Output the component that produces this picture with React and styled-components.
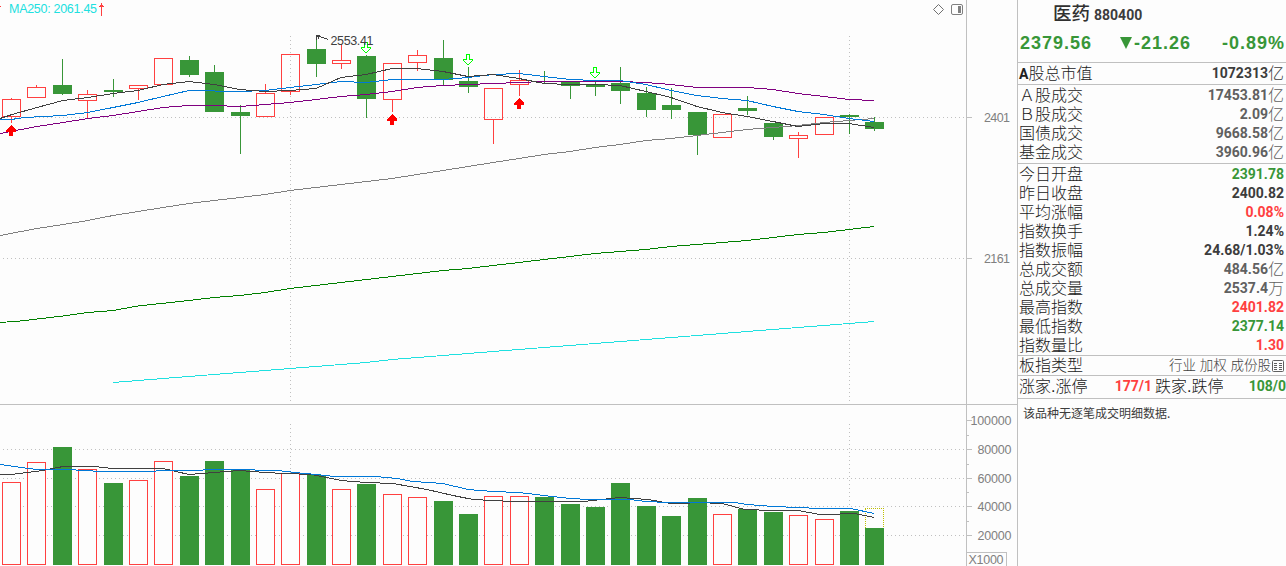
import React from 'react'
import styled, { createGlobalStyle } from 'styled-components';

const colors = {
    bg: '#fdfdfd',
    line: '#c0c0c0',
    up: '#ff4040',
    down: '#389638',
    text: '#3c3c3c',
    grey: '#606060',
    axis: '#808080',
    ma5: '#404040',
    ma10: '#0078d7',
    ma20: '#800080',
    ma60: '#808080',
    ma120: '#008000',
    ma250: '#20e0e0',
};

const GlobalStyle = createGlobalStyle`
    * {
        box-sizing: border-box;
    }
    body {
        margin: 0;
        overflow: hidden;
        background: ${colors.bg};
        color: ${colors.text};
        font-family: "Liberation Sans", "Noto Sans CJK SC", sans-serif;
    }
`;

const Page = styled.div`
    display: grid;
    grid-template-columns: 1017px 269px;
    width: 1286px;
    height: 566px;
`;

const Charts = styled.main`
    display: flex;
    flex-direction: column;
    min-width: 0;
`;

const Pane = styled.section`
    display: flex;
    height: ${props => props.$height}px;
    border-bottom: ${props => props.$divider ? `1px solid ${colors.line}` : 'none'};
`;

const Plot = styled.svg`
    display: block;
    flex: none;
    shape-rendering: crispEdges;
    text {
        font-size: 12.5px;
    }
`;

const Axis = styled(Plot)`
    text {
        fill: ${colors.axis};
    }
`;

const Side = styled.aside`
    display: flex;
    flex-direction: column;
    border-left: 1px solid ${colors.line};
    white-space: nowrap;
    overflow: hidden;
`;

const Header = styled.header`
    height: 63px;
    border-bottom: 1px solid ${colors.line};
`;

const Title = styled.div`
    display: flex;
    align-items: baseline;
    height: 30px;
    padding-left: 35px;
    line-height: 27px;
`;

const Name = styled.span`
    font-size: 18.5px;
    font-weight: 500;
    color: #303030;
`;

const Code = styled.span`
    margin-left: 4px;
    font: bold 14px Roboto, sans-serif;
`;

const Quote = styled.div`
    display: grid;
    grid-template-columns: 100px 74px 1fr;
    padding: 0 1px 0 2px;
    line-height: 27px;
    font-size: 18px;
    font-weight: bold;
    letter-spacing: 1px;
    color: ${colors.down};
    span:last-child {
        text-align: right;
    }
`;

const Triangle = styled.i`
    display: inline-block;
    border: 6.5px solid transparent;
    border-top: 12px solid ${colors.down};
    border-bottom: 0;
    margin-right: 2px;
`;

const Group = styled.div`
    padding-top: ${props => props.$top || 0}px;
    height: ${props => props.$height}px;
    border-bottom: 1px solid ${colors.line};
`;

const Row = styled.div`
    display: flex;
    align-items: center;
    justify-content: space-between;
    height: 19px;
    padding: 0 2px 0 1px;
`;

const Label = styled.span`
    font: 300 16px/19px "Liberation Sans", "Noto Sans CJK SC", sans-serif;
    color: #202020;
    b {
        font: bold 14px Roboto, sans-serif;
    }
`;

const Value = styled.span`
    display: flex;
    align-items: center;
    font: bold 14px/19px Roboto, sans-serif;
    color: ${props => props.$color || colors.text};
`;

const Unit = styled.span`
    width: 16px;
    height: 19px;
    overflow: hidden;
    font: 300 16px/19px "Liberation Sans", "Noto Sans CJK SC", sans-serif;
`;

const Kinds = styled.span`
    display: flex;
    align-items: center;
    gap: 1px;
    font: 300 13.5px/19px "Liberation Sans", "Noto Sans CJK SC", sans-serif;
    color: #404040;
`;

const Breadth = styled.div`
    display: grid;
    grid-template-columns: 68px 65px 69px 1fr;
    align-items: center;
    height: 21px;
    padding-left: 1px;
    ${Value} {
        justify-content: flex-end;
    }
    ${Label}:nth-child(3) {
        padding-left: 3px;
    }
`;

const Notice = styled.p`
    margin: 0;
    padding: 5px 5px;
    font: 400 12px/18px "Noto Sans CJK SC", sans-serif;
`;

// [direction, high, top, bottom, low, volume top]
const bars = [
    ['up', 98, 99, 117, 123, 482], ['up', 85, 87, 98, 98, 462],
    ['down', 59, 85, 94, 95, 447], ['up', 90, 94, 101, 118, 469],
    ['down', 79, 90, 92, 97, 483], ['up', 85, 85, 89, 100, 480],
    ['up', 58, 58, 85, 85, 461], ['down', 56, 60, 75, 77, 476],
    ['down', 65, 72, 112, 112, 461], ['down', 105, 112, 116, 154, 469],
    ['up', 84, 93, 117, 117, 489], ['up', 54, 54, 92, 95, 473],
    ['down', 35, 49, 64, 77, 475], ['up', 44, 60, 64, 69, 489],
    ['down', 55, 56, 99, 118, 484], ['up', 63, 63, 100, 112, 494],
    ['up', 50, 55, 63, 71, 497], ['down', 40, 58, 80, 85, 501],
    ['down', 67, 81, 87, 93, 514], ['up', 88, 88, 120, 144, 496],
    ['up', 70, 80, 85, 96, 496], ['down', 71, 81, 82, 84, 497],
    ['down', 81, 81, 86, 99, 504], ['down', 81, 84, 87, 96, 507],
    ['down', 67, 83, 91, 104, 483], ['down', 87, 93, 110, 117, 506],
    ['down', 88, 105, 110, 119, 516], ['down', 112, 112, 135, 155, 498],
    ['up', 114, 114, 138, 138, 514], ['down', 96, 108, 111, 115, 509],
    ['down', 123, 123, 137, 140, 512], ['up', 132, 135, 139, 158, 515],
    ['up', 117, 117, 135, 135, 519], ['down', 114, 115, 117, 134, 511],
    ['down', 117, 122, 129, 131, 528],
];

const lefts = [2, 27, 53, 78, 104, 129, 154, 180, 205, 231, 256, 281, 307, 332, 357, 383, 408, 434, 459, 484, 510, 535, 561, 586, 611, 637, 662, 688, 713, 738, 764, 789, 815, 840, 865];

const priceLines = [
    [colors.ma120, '0,322.5 20,321 63,316 88,312.5 113,310.5 138,306 189,300.5 214,297.5 240,295.5 265,292.5 290,288.5 341,282.5 392,276.5 443,270.5 468,268.5 493,265.5 519,262.5 544,259.5 570,256.5 595,253.5 620,251.5 646,249.5 671,246.5 697,244.5 722,242.5 747,240.5 773,237.5 798,234.5 824,232.5 849,229.5 874,226.5'],
    [colors.ma250, '113,382.5 163,378.5 214,374.5 265,370.5 290,368.5 341,364.5 366,362.5 392,359.5 443,355.5 493,351.5 544,347.5 595,343.5 646,339.5 697,335.5 747,331.5 798,327.5 849,323.5 874,321.5'],
    [colors.ma60, '0,235.5 37,228.5 63,224.5 88,220.5 113,215.5 138,211.5 163,207.5 189,203.5 214,200.5 240,197.5 265,194.5 290,190.5 341,184.5 392,178.5 417,174.5 443,170.5 468,166.5 493,162.5 519,158.5 544,154.5 570,151.5 595,147.5 620,144.5 646,140.5 671,138.5 697,135.5 722,132.5 747,129.5 773,127.5 798,125.5 824,122.5 849,120.5 874,118.5'],
    [colors.ma20, '0,133.5 37,126.5 63,122.5 88,118.5 113,115.5 138,111.5 163,107.5 189,105.5 214,105.5 240,106.5 265,104.5 290,102.5 316,99.5 341,96.5 366,94.5 392,91.5 417,87.5 443,85.5 468,84.5 493,83.5 519,82.5 544,81.5 620,81.5 646,82.5 671,84.5 697,87.5 747,87.5 773,89.5 798,93.5 824,96.5 849,99.5 874,100.5'],
    [colors.ma10, '0,119.5 11,119.5 25,117.5 63,115.5 88,112.5 113,107.5 138,102.5 163,96.5 189,90.5 240,91.5 265,90.5 290,87.5 316,84.5 341,81.5 366,82.5 392,79.5 443,79.5 468,77.5 493,74.5 519,73.5 544,76.5 570,79.5 595,80.5 620,80.5 646,84.5 671,90.5 697,95.5 722,98.5 747,100.5 773,106.5 798,111.5 824,114.5 849,118.5 874,121.5'],
    [colors.ma5, '0,118.5 12,114.5 37,107.5 63,100.5 88,97.5 113,93.5 138,90.5 163,84.5 189,81.5 214,84.5 240,89.5 265,91.5 290,90.5 316,88.5 341,77.5 366,74.5 392,68.5 417,68.5 443,71.5 468,76.5 493,74.5 519,78.5 544,83.5 570,84.5 595,84.5 620,85.5 646,91.5 671,97.5 697,106.5 722,112.5 747,116.5 773,121.5 798,126.5 824,123.5 849,123.5 874,127.5'],
];

const volumeLines = [
    [colors.ma5, '0,474.5 11,474.5 43,470.5 63,466.5 94,466.5 113,468.5 163,468.5 189,474.5 214,472.5 240,470.5 265,472.5 285,473.5 312,474.5 341,480.5 366,482.5 393,483.5 427,489.5 453,495.5 473,499.5 493,500.5 513,501.5 583,501.5 620,497.5 648,499.5 671,503.5 684,503.5 697,502.5 722,503.5 745,509.5 773,510.5 798,510.5 820,514.5 835,514.5 845,513.5 855,513.5 874,517.5'],
    [colors.ma10, '0,464.5 28,468.5 37,469.5 68,469.5 101,471.5 150,471.5 163,470.5 200,470.5 207,469.5 250,469.5 260,470.5 277,470.5 295,472.5 316,474.5 335,476.5 376,476.5 397,478.5 413,481.5 443,483.5 468,489.5 493,491.5 519,492.5 544,495.5 570,498.5 590,499.5 630,499.5 646,501.5 667,502.5 735,502.5 747,504.5 773,506.5 798,507.5 820,508.5 851,508.5 874,513.5'],
];

const Rule = ({ x1, y1, x2, y2 }) => (
    <line x1={x1} y1={y1} x2={x2} y2={y2} stroke={colors.line} strokeDasharray="1 3" />
);

const Bar = ({ x, top, bottom, kind, fill = 'none' }) => kind === 'up'
    ? <rect x={x + 0.5} y={top + 0.5} width="18" height={bottom - top - 1} fill={fill} stroke={colors.up} />
    : <rect x={x} y={top} width="19" height={bottom - top} fill={colors.down} />;

const Candle = ({ x, bar: [kind, high, top, bottom, low] }) => (
    <g>
        <path d={`M${x + 9.5} ${high}V${top}M${x + 9.5} ${bottom}V${low}`} stroke={colors[kind]} />
        <Bar x={x} top={top} bottom={bottom} kind={kind} />
    </g>
);

const BuyMark = ({ x, y }) => (
    <path d={`M${x} ${y}l5 5v2h-3v4h-4v-4h-3v-2z`} fill="#ff0000" />
);

const SellMark = ({ x, y }) => (
    <path d={`M${x - 1.5} ${y}h3v5h3v1l-4.5 4.5l-4.5-4.5v-1h3z`} fill="none" stroke="#00ff00" />
);

const Lines = ({ items }) => items.map(([color, points]) => (
    <polyline key={color} points={points} fill="none" stroke={color} />
));

const PricePane = () => (
    <Pane $height={405} $divider>
        <Plot width="966" height="404">
            <Rule x1="3" y1="117.5" x2="966" y2="117.5" />
            <Rule x1="3" y1="258.5" x2="966" y2="258.5" />
            <Rule x1="290.5" y1="36" x2="290.5" y2="404" />
            <Rule x1="849.5" y1="36" x2="849.5" y2="404" />
            {bars.map((bar, i) => <Candle key={i} x={lefts[i]} bar={bar} />)}
            <Lines items={priceLines} />
            <BuyMark x={11} y={125} />
            <BuyMark x={392} y={114} />
            <BuyMark x={519} y={98} />
            <SellMark x={366} y={42.5} />
            <SellMark x={468} y={54.5} />
            <SellMark x={595} y={67.5} />
            <path d="M316.5 40V35.5H320M317 36.5H320L328 39.5M318 37V39" fill="none" stroke={colors.ma5} />
            <text x="330.5" y="45" fill={colors.ma5} textLength="43">2553.41</text>
            <path d="M0 6.5h1M101.5 3V16M99 6.5h5M100 5.5h3" stroke={colors.up} />
            <text x="9" y="13" fill={colors.ma250} textLength="88">MA250: 2061.45</text>
            <path d="M938.5 4.5l5 5l-5 5l-5-5z" fill="none" stroke="#707070" shapeRendering="auto" />
            <rect x="951.5" y="4.5" width="11" height="10" rx="1.5" fill="none" stroke="#808080" shapeRendering="auto" />
            <rect x="958" y="6" width="3" height="7" fill="#808080" />
        </Plot>
        <Axis width="51" height="404">
            <path d="M0.5 0V404M0 117.5H6M0 258.5H6" stroke={colors.line} />
            <text x="18" y="122" textLength="26">2401</text>
            <text x="18" y="263" textLength="26">2161</text>
        </Axis>
    </Pane>
);

const VolumePane = () => (
    <Pane $height={161}>
        <Plot width="966" height="161" viewBox="0 405 966 161">
            {[449.5, 478.5, 506.5, 535.5].map(y => <Rule key={y} x1="3" y1={y} x2="966" y2={y} />)}
            <Rule x1="290.5" y1="424" x2="290.5" y2="565" />
            <Rule x1="849.5" y1="424" x2="849.5" y2="565" />
            {bars.map((bar, i) => (
                <Bar key={i} x={lefts[i]} top={bar[5]} bottom={565} kind={bar[0]} fill={colors.bg} />
            ))}
            <path d="M865.5 528V508.5M865 508.5H884M883.5 508V528" fill="none" stroke="#c0c000" strokeDasharray="1 1" />
            <Lines items={volumeLines} />
        </Plot>
        <Axis width="51" height="161" viewBox="966 405 51 161">
            <path d="M966.5 405V566M966 420.5H972M966 449.5H972M966 478.5H972M966 506.5H972M966 535.5H972M966 435.5H969M966 464.5H969M966 492.5H969M966 521.5H969M966 552.5H1006.5V566" fill="none" stroke={colors.line} />
            <text x="970.5" y="425" textLength="41">100000</text>
            <text x="977.5" y="454" textLength="34">80000</text>
            <text x="977.5" y="483" textLength="34">60000</text>
            <text x="977.5" y="511" textLength="34">40000</text>
            <text x="977.5" y="540" textLength="34">20000</text>
            <text x="968.5" y="564" textLength="35">X1000</text>
        </Axis>
    </Pane>
);

const turnover = [
    ['Ａ股成交', '17453.81', '亿', colors.grey],
    ['Ｂ股成交', '2.09', '亿', colors.grey],
    ['国债成交', '9668.58', '亿', colors.grey],
    ['基金成交', '3960.96', '亿', colors.grey],
];

const stats = [
    ['今日开盘', '2391.78', '', colors.down],
    ['昨日收盘', '2400.82'],
    ['平均涨幅', '0.08%', '', colors.up],
    ['指数换手', '1.24%'],
    ['指数振幅', '24.68/1.03%'],
    ['总成交额', '484.56', '亿', colors.grey],
    ['总成交量', '2537.4', '万', colors.grey],
    ['最高指数', '2401.82', '', colors.up],
    ['最低指数', '2377.14', '', colors.down],
    ['指数量比', '1.30', '', colors.up],
];

const StatRow = ({ label, value, unit, color }) => (
    <Row>
        <Label>{label}</Label>
        <Value $color={color}>{value}{unit && <Unit>{unit}</Unit>}</Value>
    </Row>
);

const Rows = ({ items }) => items.map(([label, value, unit, color]) => (
    <StatRow key={label} label={label} value={value} unit={unit} color={color} />
));

const QuotePanel = () => (
    <Side>
        <Header>
            <Title>
                <Name>医药</Name>
                <Code>880400</Code>
            </Title>
            <Quote>
                <span>2379.56</span>
                <span><Triangle />-21.26</span>
                <span>-0.89%</span>
            </Quote>
        </Header>
        <Group $height={22} $top={1}>
            <StatRow label={<><b>A</b>股总市值</>} value="1072313" unit="亿" />
        </Group>
        <Group $height={79} $top={1}>
            <Rows items={turnover} />
        </Group>
        <Group $height={192} $top={1}>
            <Rows items={stats} />
        </Group>
        <Group $height={20}>
            <Row>
                <Label>板指类型</Label>
                <Kinds>
                    行业 加权 成份股
                    <svg width="12" height="12" fill="none" stroke="#606060">
                        <rect x="0.5" y="0.5" width="11" height="11" rx="1" />
                        <path d="M2 3.5h3M7 3.5h3M2 5.5h3M7 5.5h3M2 7.5h3M7 7.5h3M2 9.5h3M7 9.5h3" />
                    </svg>
                </Kinds>
            </Row>
        </Group>
        <Group $height={23}>
            <Breadth>
                <Label>涨家.涨停</Label>
                <Value $color={colors.up}>177/1</Value>
                <Label>跌家.跌停</Label>
                <Value $color={colors.down}>108/0</Value>
            </Breadth>
        </Group>
        <Notice>该品种无逐笔成交明细数据.</Notice>
    </Side>
);

const App = () => {
    return (
        <>
            <GlobalStyle />
            <Page>
                <Charts>
                    <PricePane />
                    <VolumePane />
                </Charts>
                <QuotePanel />
            </Page>
        </>
    )
}

export default App
